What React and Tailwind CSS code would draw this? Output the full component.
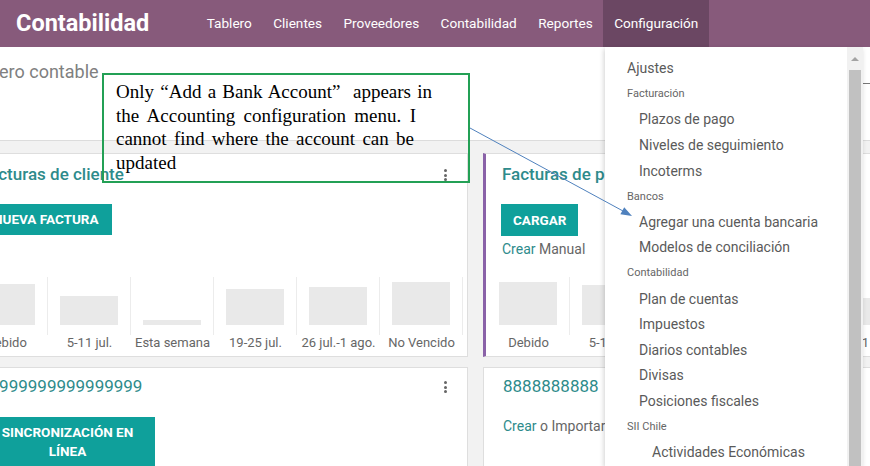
const navItems = ['Tablero', 'Clientes', 'Proveedores', 'Contabilidad', 'Reportes']

const labels = ['Debido', '5-11 jul.', 'Esta semana', '19-25 jul.', '26 jul.-1 ago.', 'No Vencido']

const menu = [
  ['Ajustes', 'top'],
  ['Facturación', 'head'],
  ['Plazos de pago', 'sub'],
  ['Niveles de seguimiento', 'sub'],
  ['Incoterms', 'sub'],
  ['Bancos', 'head'],
  ['Agregar una cuenta bancaria', 'sub'],
  ['Modelos de conciliación', 'sub'],
  ['Contabilidad', 'head'],
  ['Plan de cuentas', 'sub'],
  ['Impuestos', 'sub'],
  ['Diarios contables', 'sub'],
  ['Divisas', 'sub'],
  ['Posiciones fiscales', 'sub'],
  ['SII Chile', 'head'],
  ['Actividades Económicas', 'deep'],
]

function Kebab() {
  return (
    <div className="flex flex-col gap-[1.5px] mr-[5px]">
      <span className="w-[3px] h-[3px] rounded-full bg-[#666]" />
      <span className="w-[3px] h-[3px] rounded-full bg-[#666]" />
      <span className="w-[3px] h-[3px] rounded-full bg-[#666]" />
    </div>
  )
}

function Graph({ bars }) {
  return (
    <div className="flex">
      {bars.map((h, i) => (
        <div key={i} className="w-[83px] shrink-0">
          <div className="h-[58px] border-r border-[#ececec] flex items-end px-[12px] pb-[10px]">
            <div className="w-full bg-[#e9e9e9]" style={{ height: h }} />
          </div>
          <div className="text-center text-[13px] leading-[16px] text-[#666] whitespace-nowrap">{labels[i]}</div>
        </div>
      ))}
    </div>
  )
}

function Button({ children, className = '' }) {
  return (
    <div className={`bg-[#0fa09b] text-white font-bold text-[13.5px] ${className}`}>{children}</div>
  )
}

export default function App() {
  return (
    <div className="relative w-[870px] h-[466px] overflow-hidden bg-[#f2f2f2] font-['Roboto',sans-serif]">
      {/* top bar */}
      <nav className="h-[47px] bg-[#875a7b] flex items-stretch text-white">
        <div className="pl-[16px] w-[196px] flex items-center text-[23.5px] font-bold">Contabilidad</div>
        {navItems.map(n => (
          <div key={n} className="px-[10.7px] flex items-center text-[13.6px]">{n}</div>
        ))}
        <div className="px-[10.7px] flex items-center text-[13.6px] bg-[#6b4763]">Configuración</div>
      </nav>

      {/* control panel */}
      <div className="h-[94px] bg-white border-b border-[#dcdcdc] flex">
        <div className="w-[866px] shrink-0 pt-[13px] -ml-[35px]">
          <div className="text-[18px] leading-[24px] text-[#808080]">Tablero contable</div>
        </div>
        <div className="pt-[12px] -ml-[35px]">
          <div className="w-[200px] border-b border-[#777] pb-[4px] text-[13px] text-[#bbb]">Search...</div>
        </div>
      </div>

      {/* dashboard */}
      <div className="pt-[12px] -ml-[36px]">
        <div className="flex gap-[15px]">
          <div className="w-[504px] h-[204px] shrink-0 bg-white border border-[#dedede] px-[15px] pt-[10px]">
            <div className="h-[22px] flex items-center justify-between">
              <div className="text-[17px] font-medium text-[#2e8b8b] whitespace-nowrap">Facturas de cliente</div>
              <Kebab />
            </div>
            <Button className="mt-[18px] h-[31px] w-fit px-[13px] flex items-center">NUEVA FACTURA</Button>
            <div className="mt-[42px] -mx-[15px]">
              <Graph bars={[41, 29, 5, 36, 38, 43]} />
            </div>
          </div>
          <div className="w-[420px] h-[204px] shrink-0 bg-white border border-[#dedede] border-l-[3px] border-l-[#8a62a8] px-[16px] pt-[10px]">
            <div className="h-[22px] flex items-center">
              <div className="text-[17px] font-medium text-[#2e8b8b] whitespace-nowrap">Facturas de proveedores</div>
            </div>
            <Button className="-ml-[1px] mt-[18px] h-[32px] w-fit px-[12px] flex items-center">CARGAR</Button>
            <div className="mt-[4px] leading-[18px] text-[14px] text-[#666]">
              <span className="text-[#2e8b8b]">Crear</span> Manual
            </div>
            <div className="mt-[19px] -mx-[15px]">
              <Graph bars={[43, 40, 15, 35, 27, 30]} />
            </div>
          </div>
        </div>

        <div className="flex gap-[15px] mt-[10px]">
          <div className="w-[504px] h-[140px] shrink-0 bg-white border border-[#dedede] px-[15px] pt-[8px]">
            <div className="h-[22px] flex items-center justify-between">
              <div className="text-[17px] text-[#2e8b8b] whitespace-nowrap">99999999999999999</div>
              <Kebab />
            </div>
            <Button className="mt-[19px] w-[175px] pt-[6px] pb-[6px] text-center leading-[19px]">
              SINCRONIZACIÓN EN<br />LÍNEA
            </Button>
          </div>
          <div className="w-[420px] h-[140px] shrink-0 bg-white border border-[#dedede] px-[19px] pt-[8px]">
            <div className="h-[22px] flex items-center">
              <div className="text-[17px] text-[#2e8b8b] whitespace-nowrap">8888888888</div>
            </div>
            <div className="mt-[19px] leading-[18px] text-[14px] text-[#666] whitespace-nowrap">
              <span className="text-[#2e8b8b]">Crear</span> o Importar transacciones
            </div>
          </div>
        </div>
      </div>

      {/* dropdown menu */}
      <div className="absolute left-[605px] top-[47px] bottom-0 w-[258px] bg-white flex shadow-[-1px_2px_5px_rgba(0,0,0,0.18)]">
        <div className="flex-1 pt-[9px] pl-[22px]">
          {menu.map(([t, kind]) => (
            <div key={t} className="h-[25.6px] flex items-center whitespace-nowrap">
              {kind === 'head' ? (
                <span className="text-[11px] text-[#666]">{t}</span>
              ) : (
                <span
                  className={`text-[14px] text-[#5a5a5a] ${kind === 'sub' ? 'pl-[12px]' : ''} ${kind === 'deep' ? 'pl-[25px]' : ''}`}
                >
                  {t}
                </span>
              )}
            </div>
          ))}
        </div>
        <div className="w-[16px] bg-[#f1f1f1] flex flex-col">
          <div className="h-[23px] flex items-center justify-center">
            <div className="w-0 h-0 border-l-[4px] border-r-[4px] border-b-[4px] border-l-transparent border-r-transparent border-b-[#a3a3a3]" />
          </div>
          <div className="flex-1 mx-[2px] bg-[#c1c1c1]" />
        </div>
      </div>

      {/* annotation */}
      <div className="absolute left-[102px] top-[73px] w-[368px] h-[110px] border-2 border-[#23a055] pl-[12px] pt-[5px] font-['Liberation_Serif',serif] text-[19px] leading-[23.7px] text-black">
        <div className="w-[316px] text-justify [text-align-last:justify]">Only “Add a Bank Account”&nbsp; appears in</div>
        <div className="w-[300px] text-justify [text-align-last:justify]">the Accounting configuration menu. I</div>
        <div className="w-[298px] text-justify [text-align-last:justify]">cannot find where the account can be</div>
        <div>updated</div>
      </div>

      <svg className="absolute inset-0 pointer-events-none" width="870" height="466">
        <line x1="470" y1="128" x2="623" y2="211" stroke="#4f81bd" strokeWidth="1" />
        <polygon points="632,216 620.4,214.3 624.2,207.3" fill="#4f81bd" />
      </svg>
    </div>
  )
}
